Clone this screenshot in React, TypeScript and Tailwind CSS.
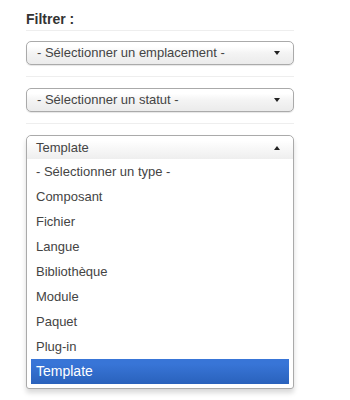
const types = [
  "- Sélectionner un type -",
  "Composant",
  "Fichier",
  "Langue",
  "Bibliothèque",
  "Module",
  "Paquet",
  "Plug-in",
  "Template",
];

function Arrow({ up }: { up?: boolean }) {
  return (
    <span
      className={
        up
          ? "h-0 w-0 border-x-[3.5px] border-b-[4px] border-x-transparent border-b-[#222]"
          : "h-0 w-0 border-x-[3.5px] border-t-[4px] border-x-transparent border-t-[#222]"
      }
    />
  );
}

function Select({ label }: { label: string }) {
  return (
    <div className="flex h-[24px] items-center justify-between rounded-[5px] border border-[#aaa] bg-gradient-to-b from-white from-20% via-[#f4f4f4] to-[#ebebeb] pl-[10px] pr-[13px] text-[13px] text-[#444] shadow-[0_1px_1px_rgba(0,0,0,0.1)]">
      <span>{label}</span>
      <Arrow />
    </div>
  );
}

export default function App() {
  return (
    <div className="min-h-[400px] bg-white font-['Liberation_Sans',Arial,sans-serif]">
      <div className="w-[294px] pl-[26px] pt-[10px]">
        <div className="text-[14px] font-bold leading-[18px] text-[#333]">Filtrer :</div>
        <div className="mt-[2px] h-px bg-[#eee]" />
        <div className="mt-[10px]">
          <Select label="- Sélectionner un emplacement -" />
        </div>
        <div className="mt-[11px] h-px bg-[#eee]" />
        <div className="mt-[11px]">
          <Select label="- Sélectionner un statut -" />
        </div>
        <div className="mt-[11px] h-px bg-[#eee]" />
        <div className="mt-[11px] rounded-t-[5px] rounded-b-[3px] border border-[#aaa] bg-white shadow-[0_4px_5px_rgba(0,0,0,0.15)]">
          <div className="flex h-[23px] items-center justify-between rounded-t-[5px] bg-gradient-to-b from-white from-20% to-[#eee] pl-[9px] pr-[13px] text-[13px] text-[#444]">
            <span>Template</span>
            <Arrow up />
          </div>
          <ul className="px-[4px] pb-[4px] text-[13px] text-[#444]">
            {types.map((t, i) => (
              <li
                key={t}
                className={
                  i === types.length - 1
                    ? "flex h-[25px] items-center bg-gradient-to-b from-[#3875d7] from-20% to-[#2a62bc] pl-[5px] text-[14px] text-white"
                    : "flex h-[25px] items-center pl-[5px]"
                }
              >
                {t}
              </li>
            ))}
          </ul>
        </div>
      </div>
    </div>
  );
}
